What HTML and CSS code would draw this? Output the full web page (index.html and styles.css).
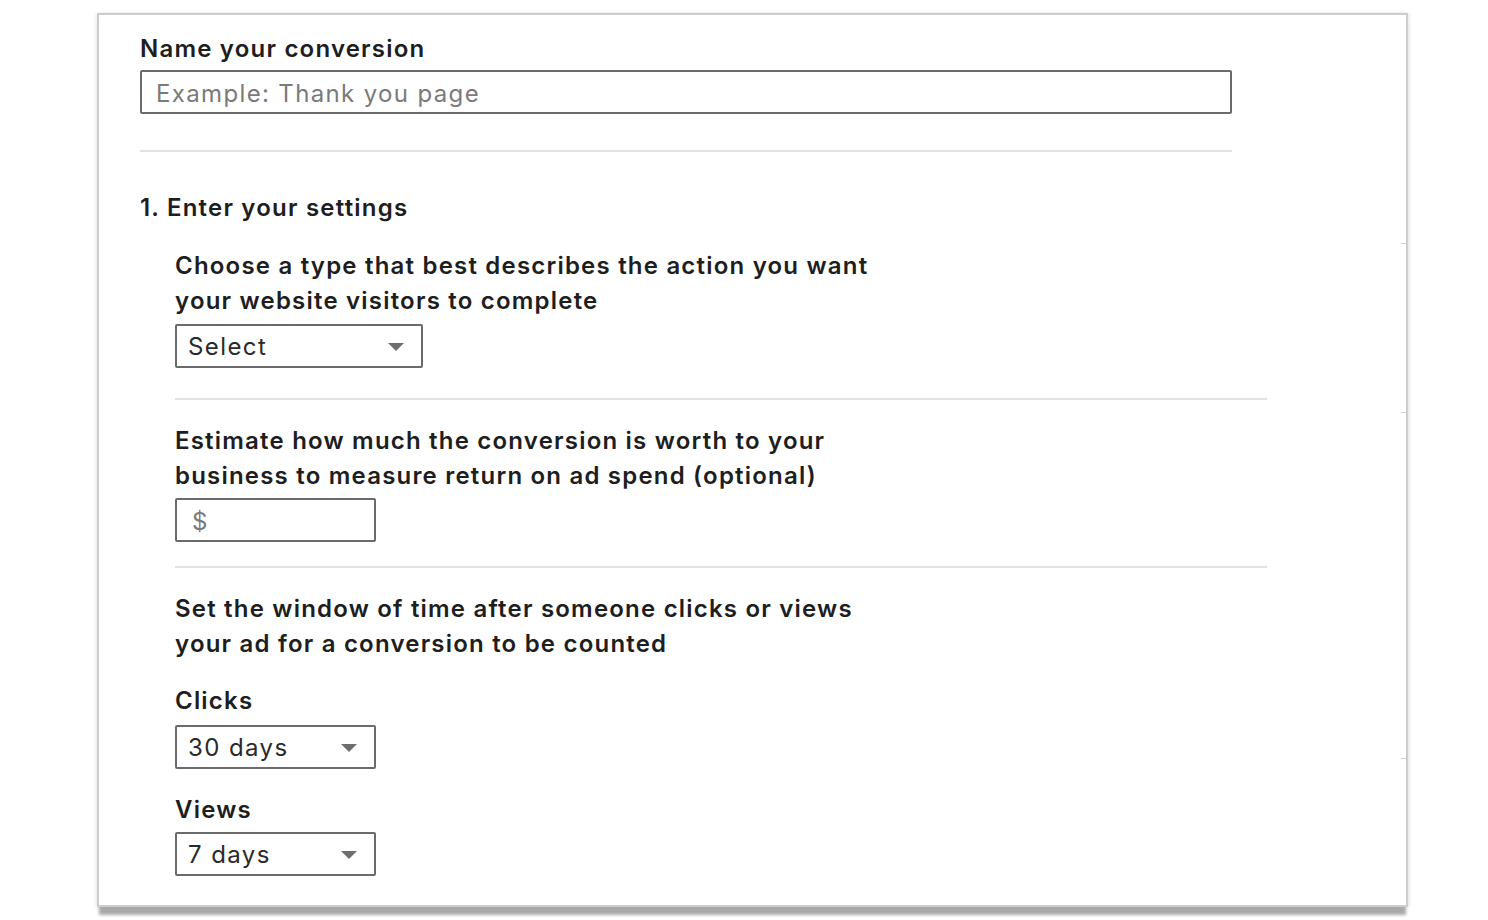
FILE: index.html
```html
<!DOCTYPE html>
<html>
<head>
<meta charset="utf-8">
<link rel="stylesheet" href="styles.css">
</head>
<body>
<div class="panel">
  <div class="label title">Name your conversion</div>
  <div class="field wide"><span class="placeholder">Example: Thank you page</span></div>
  <div class="divider top-div"></div>
  <div class="label step">1. Enter your settings</div>
  <div class="section">
    <div class="label q">Choose a type that best describes the action you want<br>your website visitors to complete</div>
    <div class="field select type-select"><span class="value">Select</span><span class="arrow"></span></div>
    <div class="divider sec-div"></div>
    <div class="label q">Estimate how much the conversion is worth to your<br>business to measure return on ad spend (optional)</div>
    <div class="field small money"><span class="placeholder">$</span></div>
    <div class="divider sec-div2"></div>
    <div class="label q">Set the window of time after someone clicks or views<br>your ad for a conversion to be counted</div>
    <div class="label sub clicks">Clicks</div>
    <div class="field select small sel1"><span class="value">30 days</span><span class="arrow"></span></div>
    <div class="label sub views">Views</div>
    <div class="field select small sel2"><span class="value">7 days</span><span class="arrow"></span></div>
  </div>
  <span class="tick t1"></span>
  <span class="tick t2"></span>
  <span class="tick t3"></span>
</div>
</body>
</html>
```

FILE: styles.css
```css
html, body {
  margin: 0;
  padding: 0;
  background: #ffffff;
}
body {
  font-family: "Inter", "Liberation Sans", sans-serif;
  color: #1f1f1f;
  height: 920px;
  overflow: hidden;
}
.panel {
  position: relative;
  box-sizing: border-box;
  margin-left: 97px;
  margin-top: 13px;
  width: 1311px;
  height: 894px;
  border: 2px solid #cdcdcd;
  background: #fff;
  padding: 16px 0 0 41px;
  box-shadow: 0 10px 3px -2px #a9a9a9, -2px 0 3px rgba(0,0,0,0.06), 2px 0 3px rgba(0,0,0,0.08);
}
.label {
  font-size: 24px;
  font-weight: 600;
  line-height: 35px;
  letter-spacing: 1.2px;
  color: #1e1e1e;
}
.field {
  box-sizing: border-box;
  height: 44px;
  border: 2px solid #6b6b6b;
  border-radius: 2px;
  display: flex;
  align-items: center;
  font-size: 24px;
  position: relative;
}
.wide {
  width: 1092px;
  margin-top: 4px;
  padding-left: 14px;
  padding-top: 3px;
}
.placeholder {
  color: #7a7a7a;
  letter-spacing: 1.35px;
}
.value {
  color: #2a2a2a;
  letter-spacing: 1.4px;
}
.divider {
  height: 2px;
  background: #e2e2e2;
  width: 1092px;
}
.top-div {
  margin-top: 36px;
}
.step {
  margin-top: 38px;
}
.section {
  padding-left: 35px;
}
.section .q:first-child {
  margin-top: 23px;
}
.select {
  padding-left: 11px;
}
.type-select {
  width: 248px;
  margin-top: 6px;
}
.small {
  width: 201px;
}
.arrow {
  position: absolute;
  right: 17px;
  top: 17px;
  width: 0;
  height: 0;
  border-left: 8px solid transparent;
  border-right: 8px solid transparent;
  border-top: 8px solid #6e6e6e;
}
.sec-div {
  margin-top: 30px;
  margin-bottom: 23px;
}
.money {
  margin-top: 5px;
  padding-left: 15px;
  padding-top: 2px;
}
.sec-div2 {
  margin-top: 24px;
  margin-bottom: 23px;
}
.clicks {
  margin-top: 22px;
}
.sel1 {
  margin-top: 7px;
}
.views {
  margin-top: 23px;
}
.sel2 {
  margin-top: 5px;
}
.tick {
  position: absolute;
  right: 0;
  width: 5px;
  height: 1px;
  background: #d0d0d0;
}
.t1 { top: 228px; }
.t2 { top: 397px; }
.t3 { top: 743px; }
```
